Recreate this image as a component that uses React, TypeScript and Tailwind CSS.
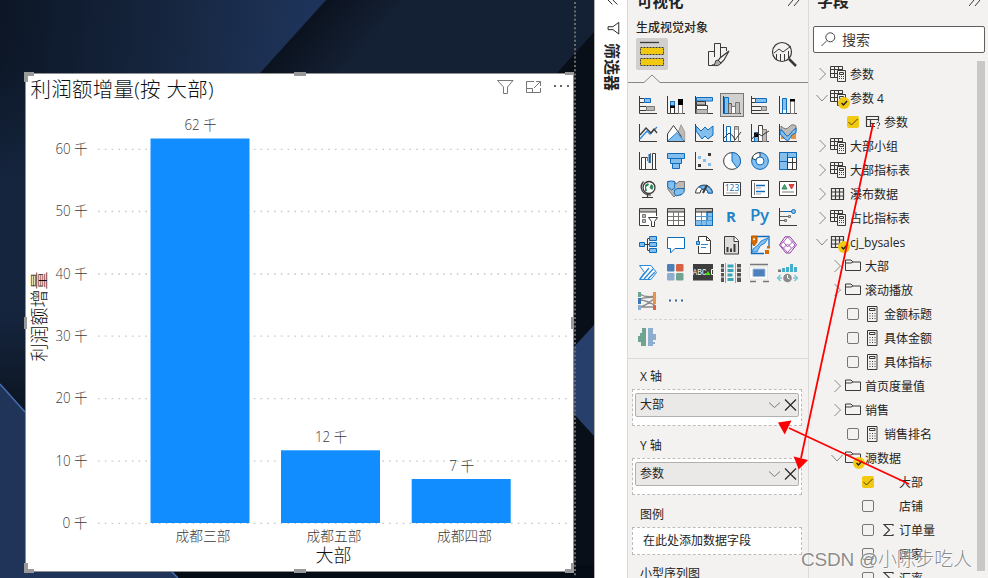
import React from "react";

const K = "#3b3a39";
const B = "#0f6cbd";
const L = "#83beec";
const G = "#bdbbb9";
const W = "#ffffff";
const FONT = "font-['Open_Sans','Noto_Sans_CJK_SC',sans-serif]";

type IconProps = { children: React.ReactNode };

function Icon({ children }: IconProps) {
  return (
    <svg className="h-[18px] w-[18px] overflow-visible" viewBox="0 0 18 18" fill="none" stroke={K} strokeWidth="1">
      {children}
    </svg>
  );
}

const Axis = () => <path d="M.5 0V17.5H18" />;

const visuals: React.ReactNode[] = [
  // Row 1: bar and column charts
  <><Axis /><path d="M1 2.5H5M1 6.5H5M1 10.5H7M1 14.5H7" /><path d="M5.5 2.5H11.5V6.5H5.5Z" fill={L} stroke={B} /><path d="M7.5 10.5H15.5V14.5H7.5Z" fill={G} stroke="#797775" /></>,
  <><Axis /><path d="M3.5 5.5H7.5V17.5H3.5Z" fill={W} stroke={K} /><path d="M3.5 5.5H7.5V10H3.5Z" fill={L} stroke={B} /><path d="M3 9.5H8V12H3Z" fill="#000" stroke="none" /><path d="M11.5 3.5H15.5V17.5H11.5Z" fill={W} stroke="#797775" /><path d="M11 3H16V9H11Z" fill="#000" stroke="none" /></>,
  <><Axis /><path d="M1.5 1.5H17.5V5H1.5Z" fill={L} stroke={B} /><path d="M1.5 5.5H10.5V9H1.5Z" fill={G} stroke={K} /><path d="M1.5 9.5H12.5V13.5H1.5Z" fill={W} /><path d="M1.5 13.5H12.5V17.5H1.5Z" fill={G} stroke="#797775" /></>,
  <><Axis /><path d="M1.5 1.5H5.5V17.5H1.5Z" fill={L} stroke={B} /><path d="M5.5 7.5H8.5V17.5H5.5Z" fill={G} stroke="#605e5c" /><path d="M8.5 10.5H12.5V17.5H8.5Z" fill={W} stroke="#797775" /><path d="M12.5 6.5H16.5V17.5H12.5Z" fill={G} stroke="#797775" /></>,
  <><Axis /><path d="M1 2.5H5V6.5H1M1 10.5H10M1 14.5H10" fill={W} /><path d="M4.5 2.5H15.5V6.5H4.5Z" fill={L} stroke={B} /><path d="M10.5 10.5H15.5V14.5H10.5Z" fill={G} stroke="#797775" /></>,
  <><Axis /><path d="M3.5 2.5H7.5V17.5H3.5Z" fill={L} stroke={B} /><path d="M4 14H7V17H4Z" fill={W} stroke="none" /><path d="M11.5 3.5H15.5V17.5H11.5Z" fill={W} stroke="#797775" /><path d="M11 3H16V5.5H11Z" fill="#000" stroke="none" /></>,
  // Row 2: lines, areas, combinations, ribbon
  <><Axis /><path d="M1 15 8 7l3 3 7-7" stroke="#2b88d8" strokeWidth="1.3" /><path d="M1 11 7 4l5 5 3-4 3 4" strokeWidth="1.3" /></>,
  <><path d="M8 17 14 .8l3.7 7V17Z" fill={G} stroke="#a19f9d" /><path d="M.5 10 6.5 1.5 14 12V17H.5Z" fill={W} /><path d="M.7 17 10 8.5 17.5 17.5H.7Z" fill={L} stroke="#2b88d8" /><path d="M.5 10V17.5H18" /></>,
  <><Axis /><path d="M1 2 6 7l4-4 3 3 5-4v9l-5 4-3-3-3 3-6-8Z" fill={L} stroke={B} /></>,
  <><Axis /><path d="M3.5 2.5H7.5V17.5H3.5Z" fill={W} stroke={B} /><path d="M11.5 2.5H15.5V17.5H11.5Z" fill={W} stroke="#797775" /><path d="M12 3H15V6H12Z" fill={G} stroke="none" /><path d="M1 14 6 9l4 3 2 4 6-8" /></>,
  <><Axis /><path d="M3.5 8.5H7.5V17.5H3.5Z" fill={L} stroke={B} /><path d="M3 9H7V13H3Z" fill="#000" stroke="none" /><path d="M7.5 1.5H11.5V17.5H7.5Z" fill={W} /><path d="M11.5 5.5H15.5V17.5H11.5Z" fill={G} stroke="#797775" /><path d="m1 15 5-6 5 3 2-2 5-3" /></>,
  <><path d="M2 2q5 5 8 1t7-1v5q-6 2-9 6T2 9Z" fill={G} stroke="#797775" /><path d="M2 10h4v5H2Zm10 0h5v5h-5Z" fill="#e8913b" stroke="none" /><path d="M1 6q3 0 5 4t5 0 6-6v5q-4 0-6 5t-6 0-4-3Z" fill={L} stroke={B} /><Axis /></>,
  // Row 3: waterfall, funnel, scatter, pie, donut, treemap
  <><Axis /><path d="M2.5 5.5H6.5V17.5H2.5ZM6.5 5.5H8.5M13.5 1.5H16.5V17.5H13.5Z" fill={W} /><path d="M8.5 5v4M11.5 1v10" stroke="#797775" /><path d="M10.5 2V11" stroke={B} strokeWidth="2" /></>,
  <><path d="M.5 1.5H17.5V6.5H.5ZM3.5 6.5H14.5V11.5H3.5ZM5.5 11.5H12.5V16.5H5.5Z" fill={L} stroke={B} /></>,
  <><Axis /><path d="M3 4h3v3H3Zm5 3h3v3H8Zm5 4h3v3h-3Z" fill={L} stroke="none" /><path d="M13 1h3v3h-3ZM3 12h3v3H3Z" fill={K} stroke="none" /></>,
  <><circle cx="9" cy="9" r="8.4" fill={W} /><path d="M9 .6a8.4 8.4 0 0 1 5 15.2L9 9Z" fill={L} stroke={B} /></>,
  <><circle cx="9" cy="9" r="8.4" fill={L} stroke={B} /><path d="M9 .6V5A4 4 0 0 0 5 8L1 6.3A8.5 8.5 0 0 1 9 .6Z" fill={W} /><circle cx="9" cy="9" r="4" fill={W} stroke={B} /></>,
  <><path d="M.5 .5H17.5V17.5H.5Z" fill={W} /><path d="M.5 .5H8.5V17.5H.5ZM8.5 .5H17.5V5.5H8.5Z" fill={L} stroke={B} /><path d="M.5 9.5H8.5" stroke={B} /><path d="M8.5 10.5H17.5M13.5 5.5V17.5M8.5 5.5V17.5" /></>,
  // Row 4: maps, gauge, cards, KPI
  <><circle cx="10" cy="7.5" r="6" fill={W} stroke={K} strokeWidth="1.3" /><path d="M6 5 9 3l1 2-3 2 1 4-2 0ZM12 4l2.500 2-1 4-3-2Z" fill="#2b8a57" stroke="none" /><path d="M4.500 1.500C-1 8 4 15 12 15M8.500 15v2M3 17.500H14" strokeWidth="1.200" /></>,
  <><path d="M.7 1.500H7.500L9 4 12 1.500H17.500V9L14 15H9L7 17 1 9.500Z" fill={G} stroke="#797775" /><path d="M.7 1.500q4-1 7 0V8l-3 2-4-3ZM8 9.500 11 8.500H17q1 5-3 6L9 16 7 13Z" fill={L} stroke={B} /></>,
  <><path d="M.5 13A8.5 8 0 0 1 17.5 13H13a4 4 0 0 0-8 0Z" fill={W} /><path d="M4 7A9 9 0 0 1 17.5 13H13a4 4 0 0 0-5-4Z" fill={L} stroke={B} /><path d="m8 13 4-8" strokeWidth="2" /></>,
  <><path d="M.5 2.5H17.5V15.5H.5Z" fill={W} /><text x="9" y="11" textAnchor="middle" fontSize="8.5" stroke="none" fill={B} className={FONT}>123</text><path d="M3 13H15" stroke="#a19f9d" /></>,
  <><path d="M.5 .5H17.5V17.5H.5Z" fill={W} /><path d="M3.5 3V15" stroke="#797775" /><path d="M5 5.5h9M5 11.5h9" stroke={B} strokeWidth="1.6" /><path d="M5 8h5M5 14h5" stroke="#a19f9d" /></>,
  <><path d="M.5 1.5H17.5V15.5H.5Z" fill={W} /><path d="m5.500 4.500 2.500 4.500h-5Z" fill="#57a773" stroke="#2b8a57" /><path d="m10 4.500h5l-2.500 4.500Z" fill="#e04848" stroke="#d83b3b" /><path d="M3 12H15" stroke="#797775" /></>,
  // Row 5: slicer, tables, scripts, influencers
  <><path d="M10 17.5H.5V.5H17.5V8" fill={W} /><path d="M1 1H17V4H1Z" fill={G} stroke="none" /><path d="M.5 4H17.5" /><path d="M3.5 6.5h3v3h-3Zm0 5h3v3h-3Z" fill={G} stroke="#797775" /><path d="M9.5 9.5h9l-3 4v5h-3v-5Z" fill={W} /></>,
  <><path d="M.5 .5H17.5V17.5H.5Z" fill={W} /><path d="M1 1H17V4H1Z" fill={G} stroke="none" /><path d="M.5 4H17.5" /><path d="M1 8.5H17M1 12.5H17M6.5 4V17M11.5 4V17" stroke="#797775" /></>,
  <><path d="M.5 .5H17.5V17.5H.5Z" fill={W} /><path d="M1 1H17V4H1Z" fill={G} stroke="none" /><path d="M12 4h5.5v13.5H.5v-5H12Z" fill={L} /><path d="M1 8.5H17M1 12.5H17M6.5 4V17M11.5 4V17" stroke="#4f95cc" /><path d="M.5 .5H17.5V4H.5Z" stroke={K} /><path d="M17.5 4V17.5H.5V12" stroke={B} /></>,
  <text x="8" y="14" textAnchor="middle" fontSize="15" fontWeight="700" stroke="none" fill="#1f83c9" className={FONT}>R</text>,
  <text x="8.5" y="13" textAnchor="middle" fontSize="17" fontWeight="600" stroke="none" fill="#1f83c9" textLength="19" className={FONT}>Py</text>,
  <><Axis /><path d="M1 3.5h12M1 8.5h9M1 12.5h4" stroke="#605e5c" /><path d="M4 3.5h9" stroke={B} /><circle cx="14.5" cy="3.5" r="2" fill={L} stroke={B} /><path d="M9.5 7.5h2v2h-2Zm-4 4h2v2h-2Z" fill={G} stroke="#797775" /></>,
  // Row 6: decomposition, Q&A, narrative, report, map, apps
  <><path d="M6 8.5h5M8.5 3v11M8.5 2.5h2M8.5 14.5h2" /><path d="M.5 6.5h5v4h-5ZM10.5 .5h7v4h-7ZM10.5 6.5h7v4h-7ZM10.5 12.5h7v4h-7Z" fill={L} stroke={B} /></>,
  <path d="M.5 1.5H17.5V12.5H8L3.5 17V12.5H.5Z" fill={W} stroke={B} />,
  <><path d="M3.5 5V.5H11.5L15.5 4.5V17.5H3.5V10" fill={W} /><path d="M11.5 .5v4h4" /><path d="M1.5 5.5h3v3h-3Z" fill={L} stroke={B} /><path d="M6 8.5h7M6 11.5h5" stroke="#2b88d8" /></>,
  <><path d="M1.5 .5H11.5L15.5 4.5V18H1.5Z" fill="#dedcda" /><path d="M11 .5v5h5" fill={W} /><path d="M4.5 11v5M8 12.5V16M11.5 8v8" strokeWidth="2" /></>,
  <><path d="M.5 6V17.5H13M6 .5H18V10" fill="none" stroke={B} strokeWidth="1.3" /><path d="M17 2 10 5 7 9 2 13 1 16H6L9 10 14 7Z" fill={L} stroke="#2b88d8" /><path d="M.5 0h5.5v6l-3 4-2.500-4Z" fill="#d76b00" stroke="#b85700" /><circle cx="3" cy="3.300" r="1" fill={W} stroke="none" /><path d="M14 14h4v4h-4Zm2-4h3v2.500h-3Z" fill="#d76b00" stroke="none" /></>,
  <><path d="m6 .8h5l6.500 8L11 17H7L.5 9Z" fill={W} stroke="#8b3a9e" /><path d="m8.500 1 5 5-5 5-4-5ZM8.500 8l4 4-4 4.500-4-4.500ZM4.500 5.500l-3 3.500 3 3.500M13 5.500l3 3.500-3 3.500" stroke="#a45bb5" /></>,
  // Row 7: automation and custom visuals
  <><path d="M.5 1.500H12L17.500 8.500 12 15.500H.5L5.500 8.500Z" fill={W} stroke="#2b88d8" /><path d="M1 15 10 4M5 15 14 5M9 15l7-7" stroke="#2b88d8" strokeWidth="1.300" /></>,
  <><rect x="0" y="0" width="7.500" height="7.500" rx="1.200" fill="#4b80b8" stroke="none" /><rect x="9" y="0" width="7.500" height="7.500" rx="1.200" fill="#d66246" stroke="none" /><rect x="0" y="9" width="7.500" height="7.500" rx="1.200" fill="#8eaed0" stroke="none" /><rect x="9" y="9" width="7.500" height="7.500" rx="1.200" fill="#6fa492" stroke="none" /></>,
  <><rect x="-2" y="0" width="20" height="16.500" fill="#3d3d3d" stroke="none" /><text x="-2.500" y="11" fontSize="9" stroke="none" fill="#fff" textLength="14" lengthAdjust="spacingAndGlyphs" className="font-['Liberation_Mono',monospace]">ABC</text><path d="m13 7 2.500 4h-5Z" fill="#38ef00" stroke="none" /><path d="M18 5.500h-1.500v5H18" stroke={W} /></>,
  <><path d="M-2 0h3v18h-3ZM14 0h4v18h-4Z" fill="#555" stroke="none" /><path d="M4.500 2h6M4.500 6.500h6M4.500 11h5M4.500 15.500h6" stroke="#3ca5bb" strokeWidth="3" /><path d="M2.500-1V19M12.500-1V19" stroke="#55bfd6" /><path d="M-2 4h3M-2 8.500h3M-2 13h3M14 4h4M14 8.500h4M14 13h4" stroke="#f3f2f1" /></>,
  <><path d="M-1 .5H17M-1 17.500H5M12 17.500h6" stroke="#777" strokeWidth="1.500" /><path d="M-1.500 3H16.500V15H-1.500Z" fill="#fff" stroke="#e6e6e6" /><path d="M2 5H14V12.500H2Z" fill="#4e80bb" stroke="#9db9da" /></>,
  <><path d="M3 4h3v4H3ZM7 3h3v5H7ZM11 0h3v8h-3ZM15 3h3v5h-3Z" fill="#45afc9" stroke="none" /><path d="M-1 5.500h3v2.500h-3Z" fill="#777" stroke="none" /><circle cx="8.500" cy="14" r="4.300" fill="#8b8b8b" stroke="none" /><path d="M8.500 11v3l2 1" stroke={W} /><path d="m1.500 11-3 3 3 3M-1 14h4M15.500 11l3 3-3 3M14 14h4" stroke="#77c6d4" strokeWidth="1.400" /></>,
  // Row 8: sankey and overflow
  <><path d="M1 2q5 4 16 2M1 8q6 0 16 6M1 15q6-1 16-10M1 7q6-2 16-2M1 15h16" stroke="#8b8b8b" strokeWidth="1.300" /><path d="M-1 0h3v5h-3Z" fill="#6fa492" stroke="none" /><path d="M-1 6h3v6h-3Z" fill="#3f76b4" stroke="none" /><path d="M-1 13h3v5h-3Z" fill="#8eaed0" stroke="none" /><path d="M14 0h3v12h-3Z" fill="#ec9148" stroke="none" /><path d="M14 13h3v5h-3Z" fill="#d6654a" stroke="none" /></>,
  <path d="M2 8.500h2M8 8.500h2M14 8.500h2" stroke="#33699e" strokeWidth="2" />,
];

const gridLines = [
  { y: 149.3, label: "60 千" },
  { y: 211.5, label: "50 千" },
  { y: 274, label: "40 千" },
  { y: 336.2, label: "30 千" },
  { y: 398.7, label: "20 千" },
  { y: 461.2, label: "10 千" },
  { y: 523.3, label: "0 千" },
];

const bars = [
  { x: 150.5, y: 138.5, value: "62 千", name: "成都三部", nameX: 203 },
  { x: 281, y: 450.3, value: "12 千", name: "成都五部", nameX: 334 },
  { x: 411.7, y: 479, value: "7 千", name: "成都四部", nameX: 464.5 },
];

function Backdrop() {
  return (
    <svg className="absolute inset-0 h-full w-full" viewBox="0 0 594 578">
      <defs>
        <linearGradient id="sky" x1="0" y1="0" x2="300" y2="40" gradientUnits="userSpaceOnUse">
          <stop offset="0" stopColor="#0c1626" />
          <stop offset=".5" stopColor="#15243c" />
          <stop offset="1" stopColor="#1e3359" />
        </linearGradient>
        <linearGradient id="fold" x1="294" y1="33" x2="340" y2="75" gradientUnits="userSpaceOnUse">
          <stop offset="0" stopColor="#0b121e" />
          <stop offset="1" stopColor="#142034" />
        </linearGradient>
        <linearGradient id="leftEdge" x1="0" y1="60" x2="0" y2="400" gradientUnits="userSpaceOnUse">
          <stop offset="0" stopColor="#132239" stopOpacity="0" />
          <stop offset=".35" stopColor="#15253e" />
          <stop offset=".75" stopColor="#15253e" />
          <stop offset="1" stopColor="#0d1624" />
        </linearGradient>
      </defs>
      <path d="M0 0H594V578H0Z" fill="url(#sky)" />
      <path d="M326 0H594V578L260 73Z" fill="url(#fold)" />
      <path d="M0 60H30V420H0Z" fill="url(#leftEdge)" />
      <path d="M594 32 557 73V578H594Z" fill="#080f18" />
      <path d="M594 325 574 347V414L594 436Z" fill="#27406b" />
      <path d="M170 565H594V578H170Z" fill="#060c15" />
      <path d="M0 384 25 412 178 578H0Z" fill="#1f3458" />
      <path d="M0 384 25 412M171 571l7 7" stroke="#426eb0" strokeWidth="1.500" />
    </svg>
  );
}

function ChartCard() {
  return (
    <div className="absolute left-[25px] top-[73px] h-[499px] w-[549px] bg-white">
      <svg className={`h-full w-full overflow-visible ${FONT}`} viewBox="25 73 549 499">
        <path d="M25.500 73.500H573.500V571.500H25.500Z" fill="none" stroke="#8f8f8f" />
        <text x="30.500" y="96.500" fontSize="20.500" fill="#111" textLength="183" className="font-light">利润额增量(按 大部)</text>
        <g fill="none" stroke="#777">
          <path d="M497.500 80.500H513L507.500 87V93.500H503.500V87Z" />
          <path d="M534 81.500H526.500V92.500H540.500V88M526.500 88.500H532.500V92.500M534 88l6-6M536 81.500H540.500V86" />
        </g>
        <path d="M554 85h2v2h-2Zm6 0h2v2h-2Zm7 0h2v2h-2Z" fill="#666" />
        {gridLines.map((g) => (
          <g key={g.label}>
            <path d={`M98 ${g.y}H568`} stroke="#c8c8c8" strokeWidth="1.300" strokeDasharray="1.600 5.170" />
            <text x="87.500" y={g.y + 4.500} textAnchor="end" fontSize="13.800" fill="#3d3b39" textLength={g.label === "0 千" ? 25 : 32} lengthAdjust="spacingAndGlyphs" className="font-light">{g.label}</text>
          </g>
        ))}
        {bars.map((b) => (
          <g key={b.name}>
            <rect x={b.x} y={b.y} width="99" height={523 - b.y} fill="#118dff" />
            <text x={b.x + 50} y={b.y - 8.500} textAnchor="middle" fontSize="13.800" fill="#3d3b39" textLength={b.value === "7 千" ? 25 : 32} lengthAdjust="spacingAndGlyphs" className="font-light">{b.value}</text>
            <text x={b.nameX} y="541" textAnchor="middle" fontSize="13.700" fill="#3d3b39" className="font-light">{b.name}</text>
          </g>
        ))}
        <text x="333.500" y="562" textAnchor="middle" fontSize="18" fill="#111" className="font-light">大部</text>
        <text transform="translate(46 316.500) rotate(-90)" textAnchor="middle" fontSize="18" fill="#111" className="font-light">利润额增量</text>
        <path d="M24 72h10v4h-6v6h-4ZM294 72h12v4h-12ZM565 72h9v3h-9ZM24 573v-10h4v6h6v4ZM294 569h12v4h-12ZM574 573v-10h-3v6h-6v4ZM24 317h3v12h-3ZM571 317h3v12h-3Z" fill="#999" />
      </svg>
    </div>
  );
}

function FilterRail() {
  return (
    <div className="flex w-[33px] shrink-0 flex-col items-center border-l border-[#b3b0ad] bg-white">
      <svg className="h-[36px] w-full shrink-0" viewBox="594 0 33 36" fill="none" stroke="#252423">
        <path d="M612-6 607-1l5 5M617-6l-5 5 5 5" />
        <path d="M618.500 22.500V34.500L612.500 30H607.500V27H612.500Z" />
      </svg>
      <div className="mt-[7px] text-[16px] font-bold leading-[33px] text-[#252423] [text-orientation:sideways] [writing-mode:vertical-rl]">筛选器</div>
    </div>
  );
}

function Well({ label, value }: { label: string; value: string }) {
  return (
    <div className="h-[69px] shrink-0 pl-[4px]">
      <div className="h-[21px] pl-[8px] text-[12px] leading-[18px]">{label}</div>
      <div className="h-[37px] w-[170px] border border-dashed border-[#bebbb8] bg-white p-[2px] pt-[3px]">
        <div className="flex h-[24px] items-center rounded-[2px] border border-[#b3b0ad] bg-[#ebe9e8] pl-[4px] text-[12px]">
          <span className="flex-1">{value}</span>
          <svg className="h-[14px] w-[30px]" viewBox="0 0 30 14" fill="none">
            <path d="m1 4.500 5.500 5 5.500-5" stroke="#7d7873" />
            <path d="m17 1.500 11 11M28 1.500l-11 11" stroke="#252423" strokeWidth="1.100" />
          </svg>
        </div>
      </div>
    </div>
  );
}

function VisualPane() {
  return (
    <section className="flex w-[182px] shrink-0 flex-col overflow-hidden border-x border-[#dcdad8]">
      <header className="flex h-[19px] shrink-0 items-start justify-between pl-[9px] pr-[8px]">
        <h2 className="-mt-[10px] text-[15.500px] font-bold leading-[22px]">可视化</h2>
        <svg className="h-[7px] w-[12px]" viewBox="0 0 12 7" fill="none" stroke={K}><path d="M0 6 5 0M6 6l5-6" /></svg>
      </header>
      <div className="h-[19px] shrink-0 pl-[8px] text-[12px] font-medium leading-[17px]">生成视觉对象</div>
      <div className="h-[53px] shrink-0">
        <svg className="h-[53px] w-[180px]" viewBox="628 38 180 53" fill="none" stroke={K}>
          <rect x="636" y="38" width="32" height="32" rx="2" fill="#d2d0ce" stroke="none" />
          <path d="M640 42.500H659" strokeWidth="1.300" />
          <path d="M640.500 47.500H663.500V54.500H640.500ZM640.500 58.500H663.500V65.500H640.500Z" fill="#f2c811" strokeDasharray="2 1" />
          <path d="M713 65.500H708.500V51.500H714.500M714.500 57V43.500H720.500V57M720.500 47.500H726.500V51" />
          <path d="m729 51-9 7-2 3 3 2 3-3Z" fill="#f3f2f1" strokeWidth="1.200" />
          <path d="M718 60q-3 0-3 3t-3 2q7 2 9-2Z" fill="#aaa" />
          <circle cx="782" cy="52" r="9.500" strokeWidth="1.200" />
          <path d="m774 53 5-4 4 3 8-6M776.500 54v5M780.500 54v7M784.500 54v7M788.500 51v7" />
          <path d="m789 59 7 7" strokeWidth="2.500" />
          <path d="M628 82.500H644L652 75 660 82.500H808" stroke="#8a8886" />
        </svg>
      </div>
      <div className="grid h-[224px] w-[168px] shrink-0 grid-cols-6 self-center">
        {visuals.map((v, i) => (
          <div key={i} className="flex h-[28px] w-[28px] items-center justify-center">
            <div className={i === 3 ? "flex h-[24px] w-[24px] items-center justify-center border border-[#797775] bg-[#d2d0ce]" : "flex h-[24px] w-[24px] items-center justify-center"}>
              <Icon>{v}</Icon>
            </div>
          </div>
        ))}
      </div>
      <div className="mx-[6px] mt-[4px] h-[39px] shrink-0 border-t border-dashed border-[#d5d3d1] pl-[4px] pt-[8px]">
        <svg className="h-[18px] w-[18px]" viewBox="0 0 18 18">
          <path d="M4 0H8V18H3V14H0V8H2V5H4Z" fill="#6fa492" />
          <path d="M10 0H15V6H18V12H15V14H17V16H15V18H10Z" fill="#8eaed0" />
        </svg>
      </div>
      <div className="flex flex-1 flex-col border-t border-[#dcdad8] pt-[9px]">
        <Well label="X 轴" value="大部" />
        <Well label="Y 轴" value="参数" />
        <div className="shrink-0 pl-[4px]">
          <div className="h-[21px] pl-[8px] text-[12px] leading-[18px]">图例</div>
          <div className="flex h-[28px] w-[170px] items-center border border-dashed border-[#bebbb8] bg-white pl-[10px] text-[12px]">在此处添加数据字段</div>
          <div className="mt-[11px] pl-[8px] text-[12px] leading-[16px]">小型序列图</div>
        </div>
      </div>
    </section>
  );
}

type Row = { text: string; indent: string; state?: "open" | "closed" | "on" | "off"; icon?: string; badge?: boolean };

const ROOT = "pl-[8px]";
const SUB = "pl-[23px]";
const LEAF = "pl-[37px]";
const DEEP = "pl-[52px]";

const rows: Row[] = [
  { text: "参数", indent: ROOT, state: "closed", icon: "calcTable" },
  { text: "参数 4", indent: ROOT, state: "open", icon: "calcTable", badge: true },
  { text: "参数", indent: LEAF, state: "on", icon: "param" },
  { text: "大部小组", indent: ROOT, state: "closed", icon: "calcTable" },
  { text: "大部指标表", indent: ROOT, state: "closed", icon: "calcTable" },
  { text: "瀑布数据", indent: ROOT, state: "closed", icon: "table" },
  { text: "占比指标表", indent: ROOT, state: "closed", icon: "calcTable" },
  { text: "cj_bysales", indent: ROOT, state: "open", icon: "table", badge: true },
  { text: "大部", indent: SUB, state: "closed", icon: "folder" },
  { text: "滚动播放", indent: SUB, state: "closed", icon: "folder" },
  { text: "金额标题", indent: LEAF, state: "off", icon: "calc" },
  { text: "具体金额", indent: LEAF, state: "off", icon: "calc" },
  { text: "具体指标", indent: LEAF, state: "off", icon: "calc" },
  { text: "首页度量值", indent: SUB, state: "closed", icon: "folder" },
  { text: "销售", indent: SUB, state: "closed", icon: "folder" },
  { text: "销售排名", indent: LEAF, state: "off", icon: "calc" },
  { text: "源数据", indent: SUB, state: "open", icon: "folder", badge: true },
  { text: "大部", indent: DEEP, state: "on" },
  { text: "店铺", indent: DEEP, state: "off" },
  { text: "订单量", indent: DEEP, state: "off", icon: "sigma" },
  { text: "国家", indent: DEEP, state: "off" },
  { text: "汇率", indent: DEEP, state: "off", icon: "sigma" },
];

function FieldIcon({ name }: { name?: string }) {
  if (name === "calcTable")
    return <><path d="M12.500 4V.5H.5V11.500H7M.5 3.500H12.500M4.500 1V11M.5 7.500H7M8.500 1V4" /><path d="M7.500 4.500H15.500V15.500H7.500Z" fill="#f3f2f1" /><path d="M9.500 6.500H13.500V8.500H9.500Z" /><path d="M9 10.500H14M9 12.500H14" strokeDasharray="1 1" /></>;
  if (name === "table") return <path d="M1.500 2.500H13.500V13.500H1.500ZM1.500 6H13.500M1.500 10H13.500M5.500 2.500V13.500M9.500 2.500V13.500" strokeWidth="1.200" />;
  if (name === "param")
    return <><path d="M13.500 7V2.500H1.500V12.500H10M1.500 5.500H13.500M5.500 5.500V12.500M6 9.500H10" strokeWidth="1.200" /><path d="M11.500 9q2-2 3 0t-1.500 3M13 13.500V15" /></>;
  if (name === "folder") return <path d="M.5 2V12.500H15.500V4H8L6 2ZM.5 5H6L8 4" />;
  if (name === "calc") return <><path d="M2.500 .5H12V15.500H2.500Z" /><path d="M4.500 2.500H10V4.500H4.500Z" /><path d="M4.500 7.500H11M4.500 10H11M4.500 12.500H11" strokeDasharray="1 1.500" /></>;
  if (name === "sigma") return <path d="M13 4V2.500H4L9.500 8 4 13.500H13V12" strokeWidth="1.100" />;
  return null;
}

function FieldRow({ row }: { row: Row }) {
  const box = row.state === "on" || row.state === "off";
  return (
    <div className={`flex h-[24px] shrink-0 items-center ${row.indent}`}>
      {box ? (
        <span className={row.state === "on" ? "flex h-[12px] w-[12px] items-center justify-center rounded-[2px] bg-[#f2c811]" : "h-[12px] w-[12px] rounded-[2px] border border-[#797775]"}>
          {row.state === "on" && <svg className="h-[12px] w-[12px]" viewBox="0 0 12 12" fill="none" stroke="#504500"><path d="m1.500 6 3 3 6-6" /></svg>}
        </span>
      ) : (
        <svg className="h-[12px] w-[12px] overflow-visible" viewBox="0 0 12 12" fill="none" stroke="#8a8886">
          {row.state === "open" ? <path d="m-1.500 3 5.500 6 5.500-6" /> : <path d="m1.500 0 6 6-6 6" />}
        </svg>
      )}
      <span className={box ? "ml-[6px] mr-[3px] h-[16px] w-[16px]" : "mr-[4px] h-[16px] w-[16px]"}>
        <svg className="h-[16px] w-[16px] overflow-visible" viewBox="0 0 16 16" fill="none" stroke={K}>
          <FieldIcon name={row.icon} />
          {row.badge && <><circle cx="14" cy="13" r="6" fill="#f2c811" stroke="none" /><path d="m11.500 13 2 2 3.500-4" stroke="#252423" strokeWidth="1.500" /></>}
        </svg>
      </span>
      <span className="whitespace-nowrap pt-[2px] text-[12px] leading-[16px]">{row.text}</span>
    </div>
  );
}

function FieldsPane() {
  return (
    <section className="flex min-w-0 flex-1 flex-col overflow-hidden pl-[1px]">
      <header className="flex h-[26px] shrink-0 items-start justify-between pl-[7px] pr-[7px]">
        <h2 className="-mt-[10px] text-[16px] font-bold leading-[22px]">字段</h2>
        <svg className="h-[7px] w-[12px]" viewBox="0 0 12 7" fill="none" stroke={K}><path d="M0 6 5 0M6 6l5-6" /></svg>
      </header>
      <div className="ml-[3px] flex h-[27px] w-[172px] shrink-0 items-center rounded-[2px] border border-[#605e5c] bg-white pl-[7px] text-[14px] text-[#3b3a39]">
        <svg className="mr-[6px] h-[15px] w-[15px]" viewBox="0 0 15 15" fill="none" stroke="#484644"><circle cx="9.300" cy="5.300" r="4.500" /><path d="M6 8.500.5 14" /></svg>
        搜索
      </div>
      <div className="flex min-h-0 flex-1 pr-[3px]">
        <div className="flex min-w-0 flex-1 flex-col overflow-hidden pt-[9px]">
          {rows.map((r, i) => <FieldRow key={i} row={r} />)}
        </div>
        <div className="mt-[8px] h-[510px] w-[8px] shrink-0 bg-[#c8c8c8]" />
      </div>
    </section>
  );
}

export default function App() {
  return (
    <main className={`relative flex h-[578px] w-[988px] overflow-hidden bg-[#f3f2f1] text-[#252423] ${FONT}`}>
      <section className="relative w-[594px] shrink-0 overflow-hidden">
        <Backdrop />
        <ChartCard />
        <svg className="absolute left-[574px] top-0 h-[576px] w-[2px]" viewBox="0 0 2 576"><path d="M1 2V576" stroke="#6b6b6b" strokeWidth="2" strokeDasharray="2 2.200" /></svg>
      </section>
      <FilterRail />
      <VisualPane />
      <FieldsPane />
      <svg className="pointer-events-none absolute inset-0 h-full w-full" viewBox="0 0 988 578">
        <text x="801" y="566" fontSize="19" fill="#777" fillOpacity=".85" stroke="#fff" strokeOpacity=".5" strokeWidth="1.500" paintOrder="stroke" textLength="171" className="font-['Liberation_Sans','Noto_Sans_CJK_SC',sans-serif] font-light">CSDN @小陈步吃人</text>
        <path d="M873 124 801 458M909 484 789 428" stroke="#f00" strokeWidth="1.800" />
        <path d="M798.700 469.500 793.700 456.500 808 460ZM778 422.500 791.500 420.500 784.700 434.500Z" fill="#f00" />
      </svg>
    </main>
  );
}
